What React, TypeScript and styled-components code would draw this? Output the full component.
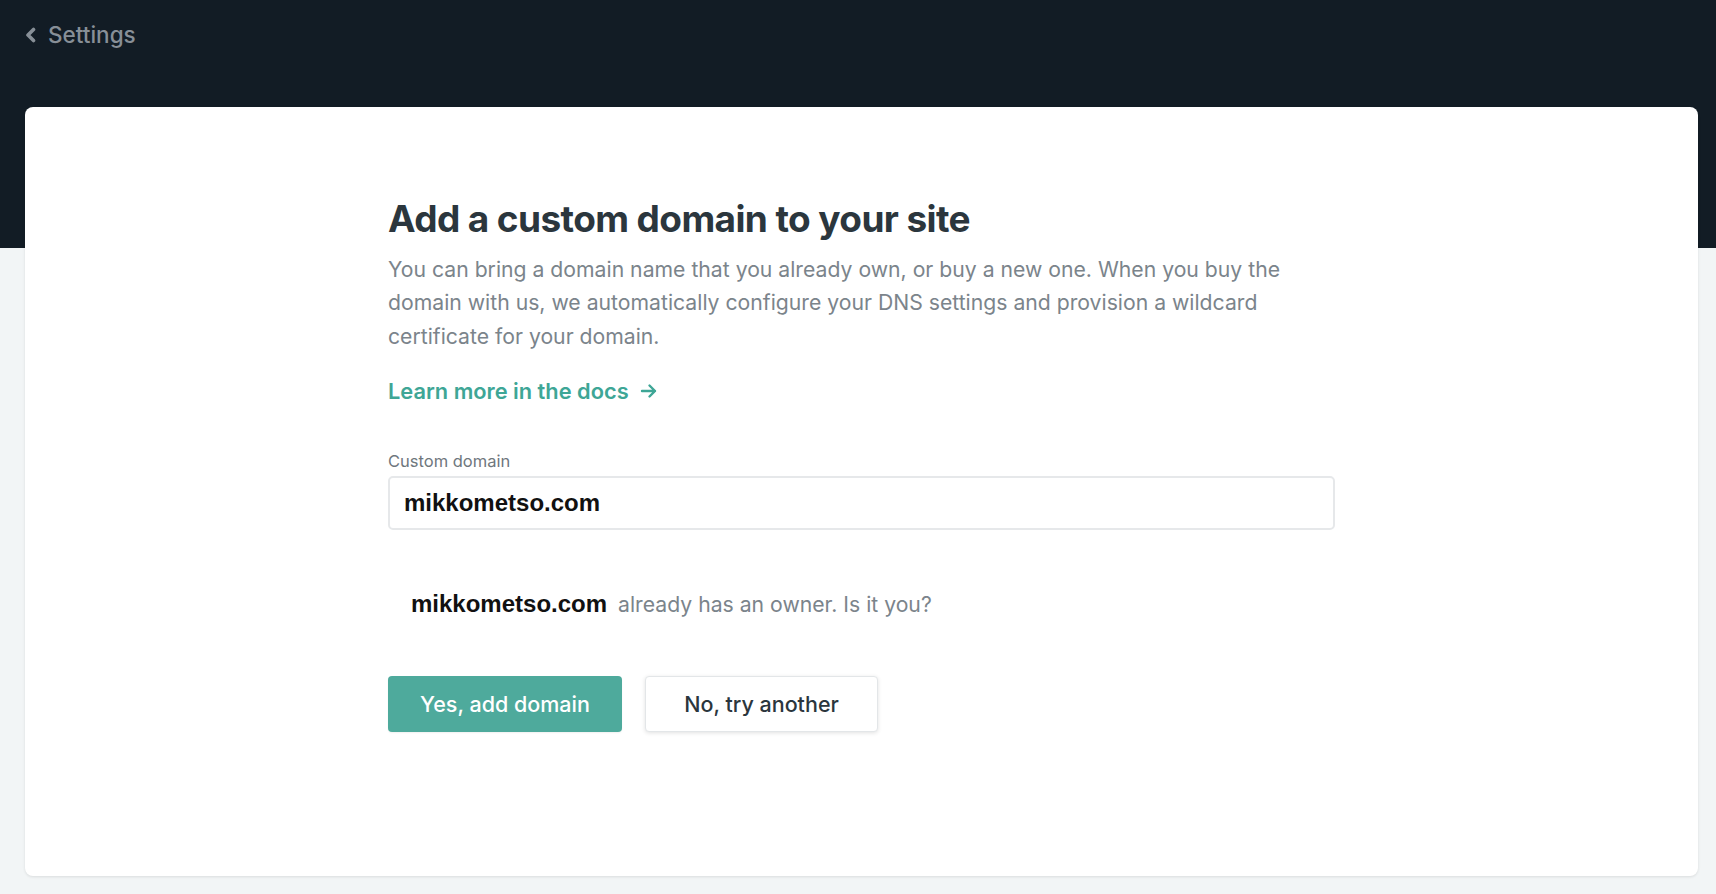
import React from "react";
import styled, { createGlobalStyle } from "styled-components";

const Global = createGlobalStyle`
  html, body { margin: 0; padding: 0; }
  body {
    font-family: Inter, "Noto Sans", sans-serif;
    background: #f2f5f6;
  }
  * { box-sizing: border-box; }
`;

const Page = styled.div`
  min-height: 894px;
  background: linear-gradient(#121c25 0, #121c25 248px, #f2f5f6 248px);
  display: flex;
  flex-direction: column;
`;

const TopBar = styled.header`
  height: 107px;
  display: flex;
  align-items: flex-start;
  padding: 21px 0 0 24px;
`;

const BackLink = styled.a`
  display: flex;
  align-items: center;
  gap: 10px;
  color: #878f97;
  font-size: 22.5px;
  font-weight: 500;
  text-decoration: none;
  line-height: 28px;
`;

const Card = styled.main`
  margin: 0 18px 0 25px;
  height: 769px;
  background: #fff;
  border-radius: 8px;
  box-shadow: 0 1px 3px rgba(0, 0, 0, 0.1);
  padding: 90px 0 0 363px;
`;

const Content = styled.div`
  width: 947px;
  display: flex;
  flex-direction: column;
`;

const Title = styled.h1`
  margin: 0;
  font-size: 37px;
  font-weight: 700;
  letter-spacing: -0.6px;
  color: #2b363d;
  line-height: 44px;
`;

const Lead = styled.p`
  margin: 12px 0 0;
  max-width: 920px;
  font-size: 21.2px;
  line-height: 33.4px;
  color: #7b848b;
`;

const DocsLink = styled.a`
  margin-top: 24px;
  display: inline-flex;
  align-items: center;
  gap: 11px;
  color: #3ea696;
  font-size: 21.8px;
  font-weight: 600;
  text-decoration: none;
  line-height: 28px;
`;

const Label = styled.label`
  margin-top: 46px;
  font-size: 16.5px;
  color: #6f777d;
  line-height: 20px;
`;

const Input = styled.input`
  margin-top: 5px;
  height: 54px;
  width: 100%;
  border: 2px solid #e6e8ea;
  border-radius: 5px;
  padding: 0 14px;
  font-family: "Liberation Sans", Arial, sans-serif;
  font-weight: 700;
  font-size: 24px;
  color: #111;
  outline: none;
  background: #fff;
`;

const Message = styled.p`
  margin: 60px 0 0 23px;
  display: flex;
  align-items: baseline;
  gap: 11px;
  font-size: 21.2px;
  line-height: 28px;
  color: #7b848b;
`;

const Domain = styled.strong`
  font-family: "Liberation Sans", Arial, sans-serif;
  font-weight: 700;
  font-size: 24px;
  color: #111;
`;

const Actions = styled.div`
  margin-top: 58px;
  display: flex;
  gap: 23px;
`;

const Button = styled.button<{ $primary?: boolean }>`
  height: 56px;
  width: ${(p) => (p.$primary ? "234px" : "233px")};
  border-radius: 4px;
  font-family: Inter, "Noto Sans", sans-serif;
  font-size: 21.5px;
  font-weight: 500;
  cursor: pointer;
  border: ${(p) => (p.$primary ? "none" : "1px solid #e3e6e8")};
  background: ${(p) => (p.$primary ? "#4eaa9c" : "#fff")};
  color: ${(p) => (p.$primary ? "#fff" : "#2b363d")};
  box-shadow: ${(p) =>
    p.$primary ? "0 1px 2px rgba(0,0,0,0.06)" : "0 1px 4px rgba(0,0,0,0.12)"};
`;

const Chevron = () => (
  <svg width="14" height="16" viewBox="0 0 14 16" aria-hidden>
    <path d="M9.5 2.5 L4 8 L9.5 13.5" fill="none" stroke="#878f97" strokeWidth="3.6" strokeLinecap="round" strokeLinejoin="round" />
  </svg>
);

const Arrow = () => (
  <svg width="18" height="16" viewBox="0 0 18 16" aria-hidden>
    <path d="M2 8 H15 M9.5 2.5 L15 8 L9.5 13.5" fill="none" stroke="#3ea696" strokeWidth="2.4" strokeLinecap="round" strokeLinejoin="round" />
  </svg>
);

export default function App() {
  return (
    <Page>
      <Global />
      <TopBar>
        <BackLink href="#">
          <Chevron />
          Settings
        </BackLink>
      </TopBar>
      <Card>
        <Content>
          <Title>Add a custom domain to your site</Title>
          <Lead>
            You can bring a domain name that you already own, or buy a new one. When you buy the
            domain with us, we automatically configure your DNS settings and provision a wildcard
            certificate for your domain.
          </Lead>
          <div>
            <DocsLink href="#">
              Learn more in the docs <Arrow />
            </DocsLink>
          </div>
          <Label htmlFor="domain">Custom domain</Label>
          <Input id="domain" defaultValue="mikkometso.com" />
          <Message>
            <Domain>mikkometso.com</Domain>
            already has an owner. Is it you?
          </Message>
          <Actions>
            <Button $primary>Yes, add domain</Button>
            <Button>No, try another</Button>
          </Actions>
        </Content>
      </Card>
    </Page>
  );
}
